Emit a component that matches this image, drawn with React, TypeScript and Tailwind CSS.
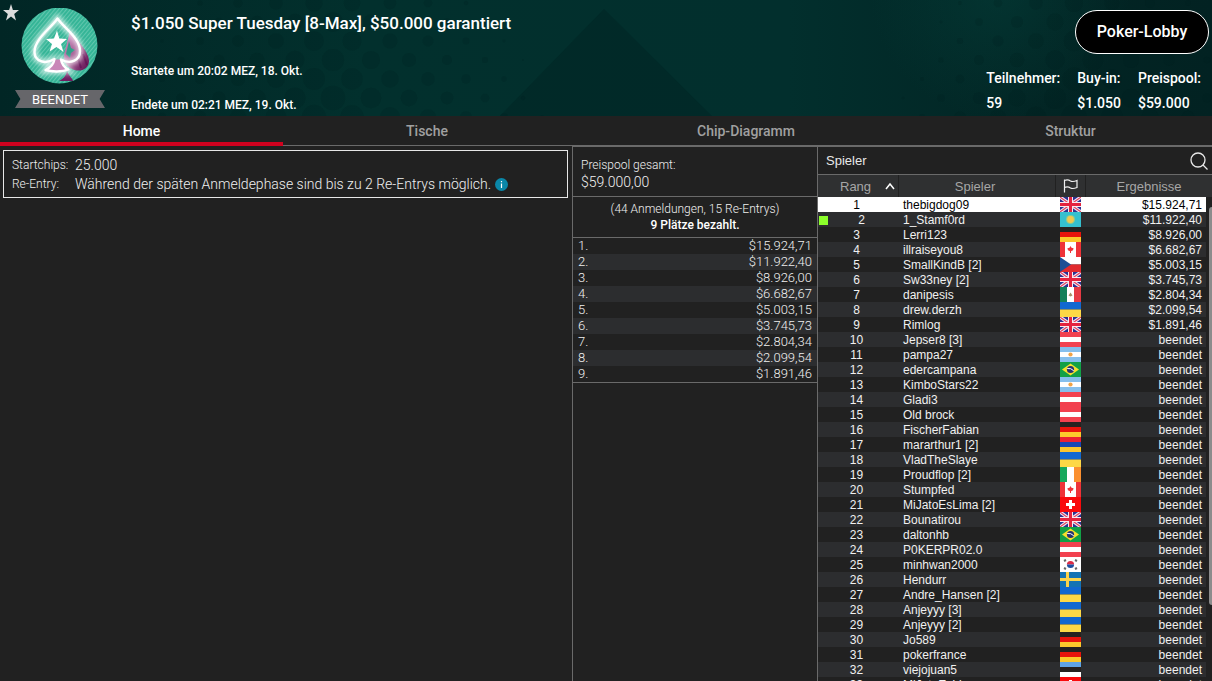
import React, { useState } from "react";
import { clsx } from "clsx";

type Country =
  | "gb" | "kz" | "de" | "ca" | "cz" | "mx" | "ua" | "at" | "ar" | "br"
  | "am" | "ie" | "ch" | "kr" | "se" | "ee";

type Player = { name: string; country: Country; result: string; online?: boolean };

const TABS = ["Home", "Tische", "Chip-Diagramm", "Struktur"];

const PAYOUTS = [
  "$15.924,71",
  "$11.922,40",
  "$8.926,00",
  "$6.682,67",
  "$5.003,15",
  "$3.745,73",
  "$2.804,34",
  "$2.099,54",
  "$1.891,46",
];

const STATS = [
  { label: "Teilnehmer:", value: "59" },
  { label: "Buy-in:", value: "$1.050" },
  { label: "Preispool:", value: "$59.000" },
];

const PLAYERS: Player[] = [
  { name: "thebigdog09", country: "gb", result: "$15.924,71" },
  { name: "1_Stamf0rd", country: "kz", result: "$11.922,40", online: true },
  { name: "Lerri123", country: "de", result: "$8.926,00" },
  { name: "illraiseyou8", country: "ca", result: "$6.682,67" },
  { name: "SmallKindB [2]", country: "cz", result: "$5.003,15" },
  { name: "Sw33ney [2]", country: "gb", result: "$3.745,73" },
  { name: "danipesis", country: "mx", result: "$2.804,34" },
  { name: "drew.derzh", country: "ua", result: "$2.099,54" },
  { name: "Rimlog", country: "gb", result: "$1.891,46" },
  { name: "Jepser8 [3]", country: "at", result: "beendet" },
  { name: "pampa27", country: "ar", result: "beendet" },
  { name: "edercampana", country: "br", result: "beendet" },
  { name: "KimboStars22", country: "ar", result: "beendet" },
  { name: "Gladi3", country: "at", result: "beendet" },
  { name: "Old brock", country: "at", result: "beendet" },
  { name: "FischerFabian", country: "de", result: "beendet" },
  { name: "mararthur1 [2]", country: "am", result: "beendet" },
  { name: "VladTheSlaye", country: "ua", result: "beendet" },
  { name: "Proudflop [2]", country: "ie", result: "beendet" },
  { name: "Stumpfed", country: "ca", result: "beendet" },
  { name: "MiJatoEsLima [2]", country: "ch", result: "beendet" },
  { name: "Bounatirou", country: "gb", result: "beendet" },
  { name: "daltonhb", country: "br", result: "beendet" },
  { name: "P0KERPR02.0", country: "at", result: "beendet" },
  { name: "minhwan2000", country: "kr", result: "beendet" },
  { name: "Hendurr", country: "se", result: "beendet" },
  { name: "Andre_Hansen [2]", country: "ua", result: "beendet" },
  { name: "Anjeyyy [3]", country: "ua", result: "beendet" },
  { name: "Anjeyyy [2]", country: "ua", result: "beendet" },
  { name: "Jo589", country: "de", result: "beendet" },
  { name: "pokerfrance", country: "de", result: "beendet" },
  { name: "viejojuan5", country: "ee", result: "beendet" },
  { name: "MiJatoEsLima", country: "ch", result: "beendet" },
];

const horizontal = (colors: string[]) =>
  colors.map((c, i) => (
    <rect key={i} y={(15 / colors.length) * i} width="21" height={15 / colors.length} fill={c} />
  ));

const vertical = (colors: string[]) =>
  colors.map((c, i) => <rect key={i} x={i * 7} width="7" height="15" fill={c} />);

const FLAGS: Record<Country, React.ReactNode> = {
  gb: (
    <>
      <rect width="21" height="15" fill="#2b3190" />
      <path d="M0 0L21 15M21 0L0 15" stroke="#f1e6f2" strokeWidth="3.4" />
      <path d="M0 0L21 15M21 0L0 15" stroke="#e2405c" strokeWidth="1.1" />
      <path d="M10.5 0V15M0 7.5H21" stroke="#f8eaf0" strokeWidth="5" />
      <path d="M10.5 0V15M0 7.5H21" stroke="#e5233f" strokeWidth="3" />
    </>
  ),
  kz: (
    <>
      <rect width="21" height="15" fill="#35c0cf" />
      <circle cx="10.5" cy="7.5" r="4.6" fill="#8cc98f" />
      <circle cx="10.5" cy="7.5" r="3.4" fill="#f0c850" />
    </>
  ),
  de: horizontal(["#262220", "#e8140c", "#fdc92c"]),
  ca: (
    <>
      <rect width="21" height="15" fill="#fff" />
      <path d="M0 0H5V15H0ZM16 0H21V15H16Z" fill="#ee3338" />
      <path d="M10.5 4L11.5 5.8L13.6 6.2L13 8.3L11 9.3V11H10V9.3L8 8.3L7.4 6.2L9.5 5.8Z" fill="#ee3338" />
    </>
  ),
  cz: (
    <>
      <rect width="21" height="7.5" fill="#fff" />
      <rect y="7.5" width="21" height="7.5" fill="#e12a2e" />
      <path d="M0 0L11 7.5L0 15Z" fill="#1d4f95" />
    </>
  ),
  mx: (
    <>
      {vertical(["#12805a", "#fff", "#e63a44"])}
      <path d="M8.5 8.5L10.5 5.5L12.5 8.5L10.5 9.5Z" fill="#a5906b" />
    </>
  ),
  ua: horizontal(["#1268d0", "#fdd846"]),
  at: horizontal(["#f2414f", "#fff", "#f2414f"]),
  ar: (
    <>
      {horizontal(["#86bfec", "#fff", "#86bfec"])}
      <circle cx="10.5" cy="7.5" r="2.1" fill="#efa347" />
    </>
  ),
  br: (
    <>
      <rect width="21" height="15" fill="#12a046" />
      <path d="M10.5 1.5L19 7.5L10.5 13.5L2 7.5Z" fill="#f6e02c" />
      <circle cx="10.5" cy="7.5" r="3.6" fill="#28336f" />
      <path d="M7.2 6.5Q11 5.8 13.8 8.8" stroke="#fff" fill="none" />
    </>
  ),
  am: horizontal(["#ec2032", "#1846b4", "#fbc52e"]),
  ie: vertical(["#17a85c", "#fff", "#fb9030"]),
  ch: (
    <>
      <rect width="21" height="15" fill="#f90a0c" />
      <path d="M10.5 3V12M6 7.5H15" stroke="#fff" strokeWidth="3" />
    </>
  ),
  kr: (
    <>
      <rect width="21" height="15" fill="#fff" />
      <path d="M6.9 7.5A3.6 3.6 0 0 1 14.1 7.5Z" fill="#dc2c47" />
      <path d="M6.9 7.5A3.6 3.6 0 0 0 14.1 7.5Z" fill="#1d4fa0" />
      <path d="M4 4L6 3M15 3L17 4M4 11L6 12M15 12L17 11" stroke="#666" strokeWidth="2" />
    </>
  ),
  se: (
    <>
      <rect width="21" height="15" fill="#1473b4" />
      <path d="M7.5 0V15M0 7.5H21" stroke="#fbd44c" strokeWidth="3" />
    </>
  ),
  ee: horizontal(["#60a4e6", "#262220", "#fff"]),
};

const Flag = ({ country }: { country: Country }) => (
  <svg viewBox="0 0 21 15" className="mx-auto block h-[15px] w-[21px]" aria-hidden="true">
    {FLAGS[country]}
  </svg>
);

// Halftone dots shrink away from the middle of each cluster
const dots: { x: number; y: number; r: number }[] = [];
for (let row = 0; row < 7; row++) {
  for (let col = 0; col < 34; col++) {
    const x = col * 38 - 9 + (row % 2 ? 0 : 19);
    const y = row * 19 + 3;
    const left = 13 - Math.abs(x - 330) / 19 - (6 - row) * 0.6;
    const right = 13 - Math.abs(x - 1080) / 16 - (6 - row) * 0.6;
    const r = Math.max(left, right);
    if (r > 1) dots.push({ x, y, r });
  }
}

const HeaderArt = () => (
  <svg
    viewBox="0 0 1212 116"
    preserveAspectRatio="none"
    className="absolute inset-0 h-full w-full"
    aria-hidden="true"
  >
    <defs>
      <linearGradient id="felt" x1="0" x2="1" y1="0" y2="0">
        <stop offset="0" stopColor="#012625" />
        <stop offset="0.3" stopColor="#02302d" />
        <stop offset="0.65" stopColor="#022f2d" />
        <stop offset="0.85" stopColor="#022524" />
        <stop offset="1" stopColor="#022222" />
      </linearGradient>
      <radialGradient id="glow" cx="1000" cy="-10" r="130" gradientUnits="userSpaceOnUse">
        <stop offset="0" stopColor="#05453f" stopOpacity="0.45" />
        <stop offset="1" stopColor="#05453f" stopOpacity="0" />
      </radialGradient>
    </defs>
    <rect width="1212" height="116" fill="url(#felt)" />
    <rect width="1212" height="116" fill="url(#glow)" />
    <path d="M604 9L712 116H500Z" fill="#012625" opacity="0.6" />
    {dots.map((d) => (
      <circle key={`${d.x}-${d.y}`} cx={d.x} cy={d.y} r={d.r} fill="#001c1c" opacity="0.2" />
    ))}
  </svg>
);

const Logo = () => (
  <svg viewBox="0 0 80 78" className="h-[78px] w-20" aria-hidden="true">
    <defs>
      <pattern id="stripes" width="3" height="3" patternUnits="userSpaceOnUse" patternTransform="rotate(-50)">
        <rect width="3" height="3" fill="#35b597" />
        <rect width="3" height="1" fill="#62c7ae" />
      </pattern>
      <linearGradient id="plum" x1="0" y1="0" x2="1" y2="1">
        <stop offset="0" stopColor="#d9a3cd" />
        <stop offset="0.5" stopColor="#a0568f" />
        <stop offset="1" stopColor="#5d0d50" />
      </linearGradient>
      <filter id="neon" x="-30%" y="-30%" width="160%" height="160%">
        <feGaussianBlur stdDeviation="2.6" />
      </filter>
      <clipPath id="disc">
        <circle cx="39.5" cy="37.5" r="38" />
      </clipPath>
    </defs>
    <g clipPath="url(#disc)">
      <rect width="80" height="78" fill="url(#stripes)" />
      <path d="M50 23C58 33 69 44 69 53C69 61 60 65 52 61C46 58 44 54 44 47Z" fill="url(#plum)" />
      <path d="M47 63C49 68 53 71 53 73H39C43 71 46 68 47 63Z" fill="#6f1e61" />
      <path d="M58 50L61 60M63 46L67 57" stroke="#5d0d50" strokeWidth="2" opacity="0.6" />
      <path d="M49 33L51 40L55 42L51 45L50 50L46 46Z" fill="#2f9e88" />
      <path
        d="M37.500 10.500C31 20 14.500 31 14.500 44C14.500 53 24 57 32.500 51.500C32 57 29 60 25.500 63H48.500C45 60 42.500 57 42 51.500C51 57 60 52 60 43C60 30 44 20 37.500 10.500Z"
        stroke="#fff"
        strokeWidth="6"
        fill="none"
        opacity="0.75"
        filter="url(#neon)"
      />
      <path d="M32.500 51.500C32 57 29 60 25.500 63H48.500C45 60 42.500 57 42 51.500Z" fill="#c987b8" />
      <path
        d="M34.500 51C25 57 14.500 53 14.500 44C14.500 31 31 20 37.500 10.500C44 20 60 30 60 43C60 52 51 57 41 51.500C42 57 45 60 48.500 61.500C42 64 32 64 25.500 62C30 60 33.500 57 34.500 51Z"
        fill="none"
        stroke="#fff"
        strokeWidth="2.4"
        strokeLinejoin="round"
      />
      <path d="M37 22.500L39.300 30.500L47 31L41 36L43.500 44L36.500 39L29.500 43.500L32 36L26 31L34 30.500Z" fill="#fff" />
    </g>
  </svg>
);

const SearchIcon = () => (
  <svg viewBox="0 0 18 18" className="h-[18px] w-[18px]" fill="none" stroke="#e8e8e8" strokeWidth="1.3" aria-hidden="true">
    <circle cx="8" cy="8" r="7" />
    <path d="M13 13L17.500 17.500" />
  </svg>
);

const Header = () => (
  <header className="relative flex h-[116px] shrink-0 overflow-hidden bg-[#012826]">
    <HeaderArt />
    <button type="button" aria-label="Favorit" className="absolute top-1 left-[3px]">
      <svg viewBox="0 0 16 17" className="h-[17px] w-4" aria-hidden="true">
        <path d="M8 0L9.900 6H16L11.200 10L13 16.500L8 12.600L3 16.500L4.800 10L0 6H6.100Z" fill="#dcdcdc" />
      </svg>
    </button>
    <div className="relative flex w-[120px] flex-col items-center gap-1 pt-2">
      <Logo />
      <div className="flex h-[18px] w-[90px] items-center justify-center bg-[#66666a] pt-0.5 text-[13px] text-white [clip-path:polygon(0_0,100%_0,94%_50%,100%_100%,0_100%,6%_50%)]">
        BEENDET
      </div>
    </div>
    <div className="relative flex-1 pl-[11px] font-medium text-white">
      <h1 className="mt-3 text-[17px] leading-[22px] font-medium">
        $1.050 Super Tuesday [8-Max], $50.000 garantiert
      </h1>
      <p className="mt-7 text-xs leading-[18px]">Startete um 20:02 MEZ, 18. Okt.</p>
      <p className="mt-4 text-xs leading-[18px]">Endete um 02:21 MEZ, 19. Okt.</p>
    </div>
    <div className="relative flex flex-col items-end pt-2.5 pr-[3px] font-medium text-white">
      <button
        type="button"
        className="h-11 w-[134px] rounded-full border border-white bg-black text-base font-medium"
      >
        Poker-Lobby
      </button>
      <dl className="mt-3 mr-2 flex gap-[17px] text-sm leading-[25px]">
        {STATS.map((s) => (
          <div key={s.label}>
            <dt>{s.label}</dt>
            <dd>{s.value}</dd>
          </div>
        ))}
      </dl>
    </div>
  </header>
);

const PrizePool = () => (
  <section className="flex w-[245px] shrink-0 flex-col border-t border-r border-[#6a6a6a] font-light text-[#f0f0f0]">
    <div className="border-b border-[#6a6a6a] px-2 pt-2.5 pb-[5px]">
      <p className="text-xs leading-[17px]">Preispool gesamt:</p>
      <p className="text-sm leading-[17px]">$59.000,00</p>
    </div>
    <div className="border-b border-[#6a6a6a] py-1 text-center text-xs leading-4">
      <p>(44 Anmeldungen, 15 Re-Entrys)</p>
      <p className="font-medium text-white">9 Plätze bezahlt.</p>
    </div>
    <ol className="border-b border-[#6a6a6a]">
      {PAYOUTS.map((amount, i) => (
        <li
          key={i}
          className="flex justify-between px-[5px] text-[13px] leading-4 even:bg-[#2c2d2f]"
        >
          <span>{i + 1}.</span>
          <span>{amount}</span>
        </li>
      ))}
    </ol>
  </section>
);

const PlayerTable = () => (
  <section className="flex w-[394px] shrink-0 flex-col border-t border-[#6a6a6a] font-['Liberation_Sans',Arial,sans-serif]">
    <div className="flex h-7 shrink-0 items-center justify-between border-b border-[#6a6a6a] pr-1 pl-2 text-[13px] text-[#e8e8e8]">
      <h2>Spieler</h2>
      <button type="button" aria-label="Suchen">
        <SearchIcon />
      </button>
    </div>
    <div className="relative min-h-0 flex-1 overflow-hidden">
      <table className="w-full table-fixed border-separate border-spacing-0 text-xs leading-[13px] text-[#f0f0f0]">
        <colgroup>
          <col className="w-[81px]" />
          <col />
          <col className="w-[30px]" />
          <col className="w-[126px]" />
        </colgroup>
        <thead>
          <tr className="h-[22px] bg-[#2f3031] text-[13px] text-[#a6a6a6]">
            <th className="border-r border-[#212121] p-0 font-normal">
              <span className="flex items-center justify-between pr-[3px] pl-[22px]">
                Rang
                <svg viewBox="0 0 10 8" className="h-2 w-2.5" fill="none" stroke="#fff" strokeWidth="1.5" aria-hidden="true">
                  <path d="M1 7L5 2L9 7" />
                </svg>
              </span>
            </th>
            <th className="border-r border-[#212121] p-0 pr-1 font-normal">Spieler</th>
            <th className="border-r border-[#212121] p-0" aria-label="Land">
              <svg viewBox="0 0 15 14" className="mx-auto block h-3.5 w-[15px]" fill="none" stroke="#f0f0f0" strokeWidth="1.2" aria-hidden="true">
                <path d="M1.500 0.500V13.500M1.500 1.500C4 0.500 6 1 7.500 2C9.500 3 11.500 2.500 14 1.500V8.500C11.500 9.500 9.500 10 7.500 9C6 8 4 7.500 1.500 8.500" />
              </svg>
            </th>
            <th className="p-0 font-normal">Ergebnisse</th>
          </tr>
        </thead>
        <tbody>
          {PLAYERS.map((p, i) => (
            <tr
              key={i}
              className={clsx("h-[15px]", i === 0 ? "bg-white text-black" : "even:bg-[#2c2d2f]")}
            >
              <td className="p-0 pt-0.5 pr-1">
                <span className="flex items-center">
                  {p.online && <i className="ml-px h-[9px] w-[9px] bg-[#8cff2b]" />}
                  <span className="flex-1 text-center">{i + 1}</span>
                </span>
              </td>
              <td className="p-0 pt-0.5 pl-1 whitespace-nowrap">{p.name}</td>
              <td className="p-0 pr-px">
                <Flag country={p.country} />
              </td>
              <td className="p-0 pt-0.5 pr-2.5 text-right">{p.result}</td>
            </tr>
          ))}
        </tbody>
      </table>
      {/* scroll bar */}
      <div className="absolute top-[22px] right-0 bottom-0 w-1.5 bg-[#212121] pt-2.5 pl-[3px]">
        <div className="h-[84%] rounded-l-sm bg-[#8c8c8c]" />
      </div>
    </div>
  </section>
);

const App = () => {
  const [activeTab, setActiveTab] = useState(TABS[0]);

  return (
    <div className="flex h-screen flex-col overflow-hidden bg-[#212121] font-['Roboto',sans-serif]">
      <Header />

      <div className="h-[30px] shrink-0 border-b border-[#6a6a6a]">
        <nav className="-mr-2 grid h-full grid-cols-[283fr_288fr_350fr_299fr]">
          {TABS.map((tab) => (
            <button
              key={tab}
              type="button"
              onClick={() => setActiveTab(tab)}
              className={clsx(
                "relative text-sm font-medium",
                tab === activeTab ? "text-white" : "text-[#a0a0a0]"
              )}
            >
              {tab}
              {tab === activeTab && (
                <span className="absolute inset-x-0 -bottom-px h-1 bg-[#d0021f]" />
              )}
            </button>
          ))}
        </nav>
      </div>

      <main className="flex min-h-0 flex-1">
        <section className="min-w-0 flex-1 border-r border-[#6a6a6a] pt-1 pr-1 pl-[3px]">
          <dl className="grid grid-cols-[63px_1fr] items-center border border-[#e8e8e8] px-2 pt-[5px] pb-[3px] text-sm leading-[19px] font-light text-[#f0f0f0]">
            <dt className="text-xs leading-[19px]">Startchips:</dt>
            <dd>25.000</dd>
            <dt className="text-xs leading-[19px]">Re-Entry:</dt>
            <dd className="flex items-center gap-1">
              Während der späten Anmeldephase sind bis zu 2 Re-Entrys möglich.
              <svg viewBox="0 0 13 13" className="h-[13px] w-[13px] shrink-0" aria-hidden="true">
                <circle cx="6.500" cy="6.500" r="6.500" fill="#0a87a8" />
                <path d="M6.500 5.500V10M6.500 3V4.300" stroke="#fff" strokeWidth="1.200" />
              </svg>
            </dd>
          </dl>
        </section>
        <PrizePool />
        <PlayerTable />
      </main>
    </div>
  );
};

export default App;
